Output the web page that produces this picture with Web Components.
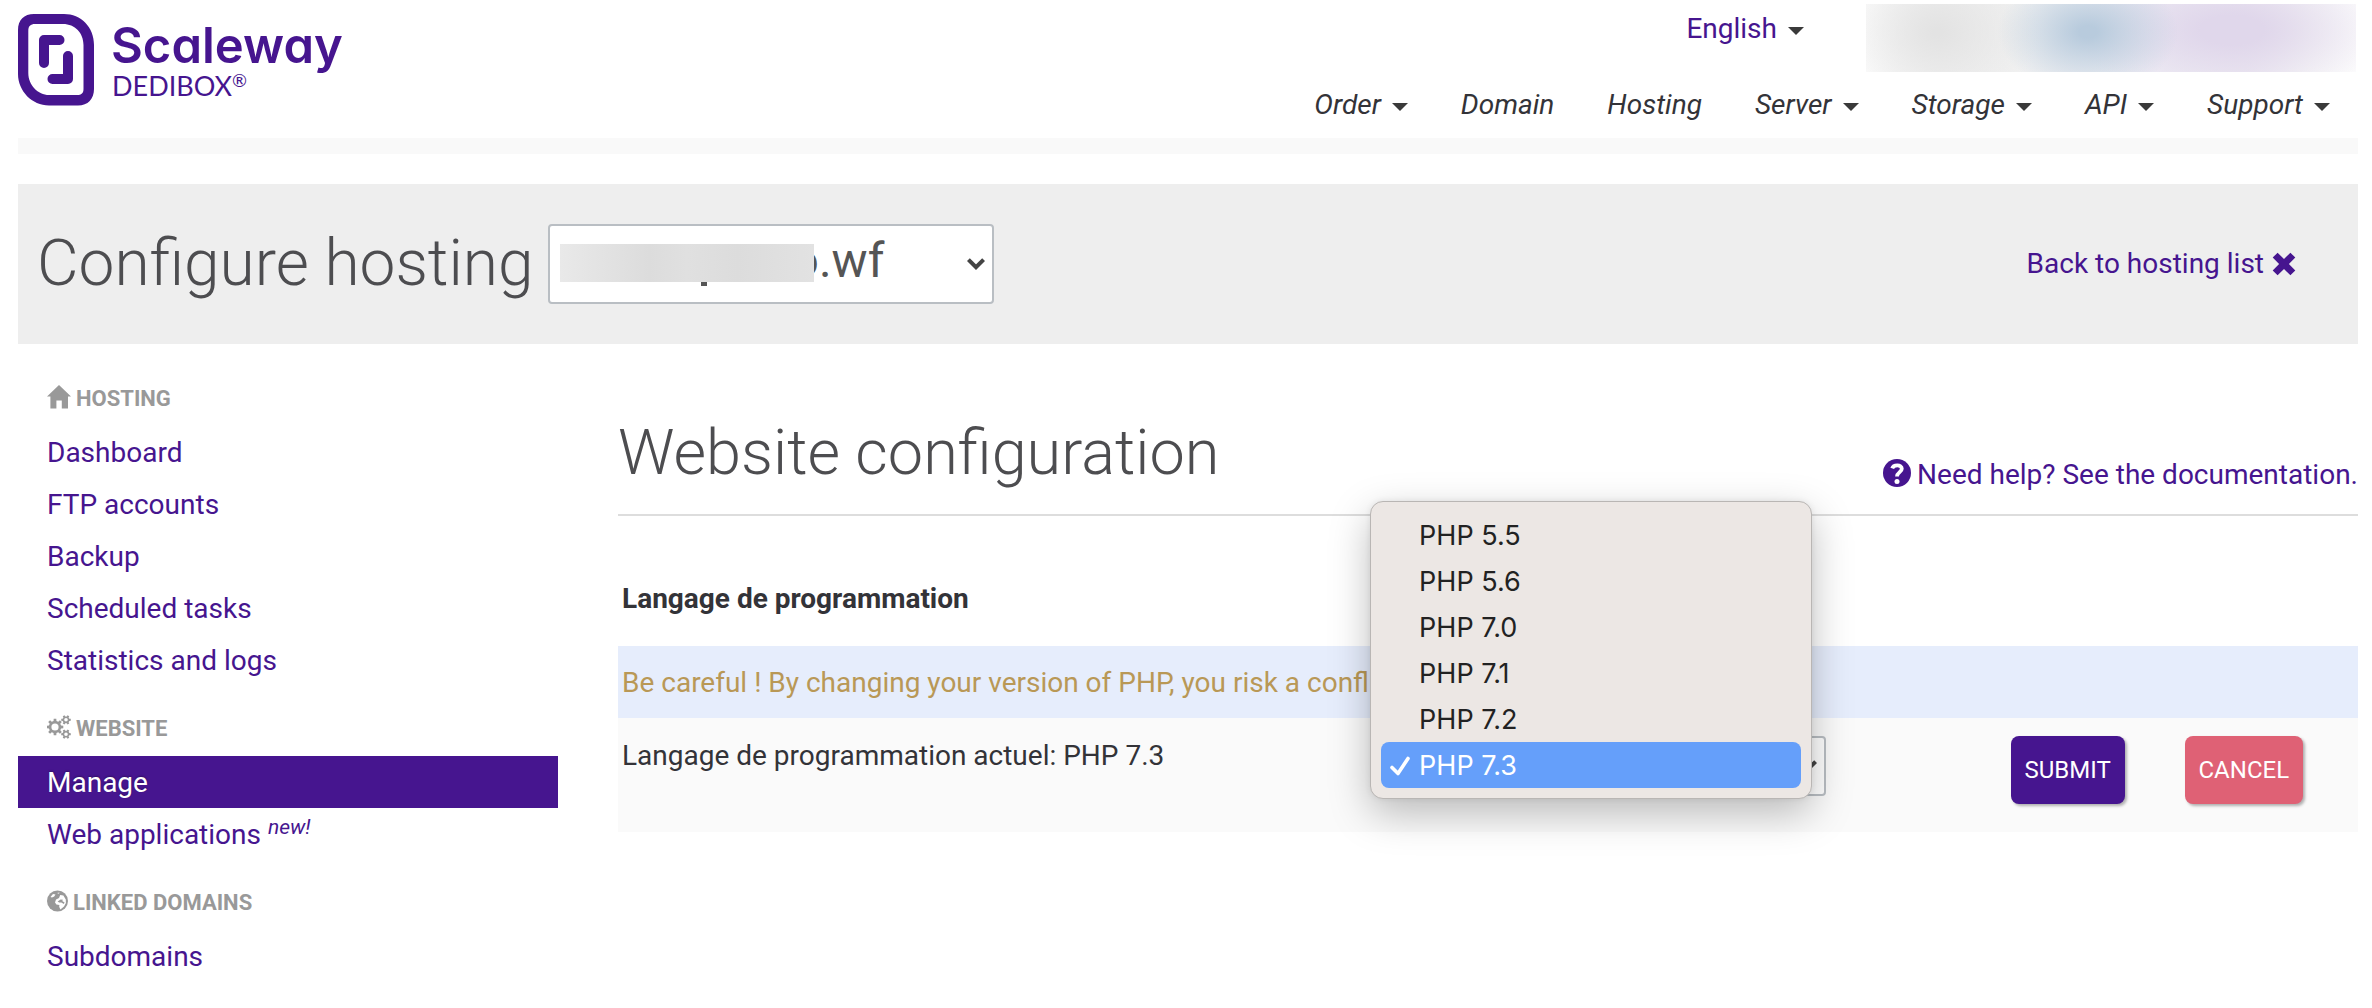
<!DOCTYPE html>
<html lang="en">
<head>
<meta charset="utf-8">
<title>Scaleway Dedibox - Configure hosting</title>
<style>
  body { margin: 0; background: #fff; color: #333338; font: 28px/40px Roboto, "Liberation Sans", sans-serif; }
</style>
</head>
<body>
<sw-app></sw-app>

<script>
const PURPLE = '#46158f';

const define = (name, html) => customElements.define(name, class extends HTMLElement {
  constructor() {
    super();
    this.attachShadow({ mode: 'open' }).innerHTML = html;
  }
});

/* Outline of a cog wheel with a round hole. */
function gear(cx, cy, outer, inner, hole, teeth) {
  const pts = [];
  const step = Math.PI * 2 / teeth;
  for (let i = 0; i < teeth; i++) {
    const a = i * step;
    for (const [r, d] of [[inner, -0.30], [outer, -0.20], [outer, 0.20], [inner, 0.30]]) {
      pts.push((cx + r * Math.cos(a + d * step)).toFixed(2) + ' ' + (cy + r * Math.sin(a + d * step)).toFixed(2));
    }
  }
  return `M${pts.join('L')}ZM${cx - hole} ${cy}a${hole} ${hole} 0 1 0 ${hole * 2} 0a${hole} ${hole} 0 1 0 ${-hole * 2} 0Z`;
}

const ICONS = {
  home: [24, 24, '<path d="M12 0L24 11.6H21V23.6H14.8V15.4H9.4V23.6H3.4V11.6H0Z"/>'],
  cogs: [24, 24, `<path fill-rule="evenodd" d="${gear(8, 12, 8.4, 6.2, 3.6, 8)}${gear(19, 4.8, 4.9, 3.5, 1.8, 6)}${gear(19, 19.2, 4.9, 3.5, 1.8, 6)}"/>`],
  globe: [21, 22, '<circle cx="10.500" cy="11" r="10.500"/><path fill="#fff" d="M3.500 7L6 4L8.500 4.400L7.200 6.600L5 7.600ZM10 3L12.500 2.400L12 3.800ZM8 12.400L9 9.600L12 8L13.200 5L16.400 5.600L18.800 9.400L18.900 13L17 16.600L13.400 19.400L12.200 16.800L12.400 15L9.400 14.600Z"/><path d="M10.600 11.600L13.600 9.600L16 9.800L15.200 11L17.600 12.600L16.800 14L14.400 12.400L12.200 12.600Z"/>'],
  cross: [24, 24, '<path d="M5.600 0.700L12 7.100L18.400 0.700L23.300 5.600L16.900 12L23.300 18.400L18.400 23.300L12 16.900L5.600 23.300L0.700 18.400L7.100 12L0.700 5.600Z"/>'],
  help: [28, 28, '<circle cx="14" cy="14" r="14"/><path d="M9.200 9.400C10.400 5.400 18.800 5.200 18.800 9.800C18.800 13.200 14 13.200 14 17.600" fill="none" stroke="#fff" stroke-width="3.800"/><circle cx="14" cy="22.400" r="2.500" fill="#fff"/>'],
  caret: [16, 8, '<path d="M0 0H16L8 8Z"/>'],
  chevron: [18, 12, '<path d="M1.400 1.600L9 9.200L16.600 1.600" fill="none" stroke="currentColor" stroke-width="4"/>'],
  check: [20, 20, '<path d="M2 11.500L8 17.500L18 2.500" fill="none" stroke="currentColor" stroke-width="3.600" stroke-linecap="round" stroke-linejoin="round"/>']
};

customElements.define('sw-icon', class extends HTMLElement {
  connectedCallback() {
    const [w, h, body] = ICONS[this.getAttribute('name')];
    this.attachShadow({ mode: 'open' }).innerHTML = `
      <style>:host { display: inline-block; flex: none; line-height: 0; } svg { display: block; }</style>
      <svg width="${w}" height="${h}" viewBox="0 0 ${w} ${h}" fill="currentColor" aria-hidden="true">${body}</svg>`;
  }
});

define('sw-logo', `
  <style>
    :host { display: block; color: ${PURPLE}; }
    a { display: flex; gap: 17px; color: inherit; text-decoration: none; }
    svg { display: block; }
    .words { display: flex; flex-direction: column; padding-top: 6px; }
    .name { font: 600 49px/52px Inter, Lato, sans-serif; font-feature-settings: "cv11"; }
    .product { display: flex; align-items: flex-start; font: 27px/28px Lato, sans-serif; padding-left: 1px; }
    .mark { font-size: 18px; line-height: 16px; }
  </style>
  <a href="#">
    <svg width="76" height="92" viewBox="0 0 76 92" aria-hidden="true">
      <path fill="currentColor" fill-rule="evenodd" d="M16 0H46C63 0 76 13 76 31V75C76 85 70 91.500 60 91.500H31C14 91.500 0 77 0 60V16C0 6 6 0 16 0ZM17 10C12.500 10 10.300 12 10.300 17V59C10.300 71 20 81 31 81H59C63.500 81 65.500 79 65.500 75V31C65.500 19 57 10 45 10Z"/>
      <path fill="none" stroke="currentColor" stroke-width="10" stroke-linecap="round" stroke-linejoin="round" d="M26 49V26H41.500M50 42V65H34.500"/>
    </svg>
    <span class="words">
      <span class="name">Scaleway</span>
      <span class="product">DEDIBOX<span class="mark">®</span></span>
    </span>
  </a>`);

define('sw-menu-item', `
  <style>
    :host { display: block; }
    a { display: flex; align-items: center; gap: 11px; color: inherit; text-decoration: none; }
    .caret { display: none; color: #3a3a3a; }
    :host([menu]) .caret { display: inline-block; padding-top: 4px; }
  </style>
  <a href="#"><slot></slot><sw-icon class="caret" name="caret"></sw-icon></a>`);

define('sw-header', `
  <style>
    :host { display: block; border-bottom: 16px solid #f9f9f9; }
    .bar { display: flex; justify-content: space-between; align-items: flex-start; padding-bottom: 13px; }
    sw-logo { padding-top: 14px; }
    .right { display: flex; flex-direction: column; align-items: flex-end; gap: 13px; }
    .account { display: flex; align-items: flex-start; gap: 62px; padding: 4px 2px 0 0; }
    .account sw-menu-item { color: ${PURPLE}; padding-top: 5px; }
    .user {
      width: 490px; height: 68px;
      background:
        radial-gradient(ellipse 90px 62px at 222px 28px, #b8cbdd 10%, #b8cbdd00 100%),
        radial-gradient(ellipse 160px 74px at 366px 26px, #e0d7eb 20%, #e0d7eb00 100%),
        radial-gradient(ellipse 100px 80px at 72px 28px, #e3e3e3 5%, #e3e3e300 100%),
        linear-gradient(90deg, #fcfcfc 0, #f2f2f2 70px, #f1f1f1 150px, #f0eff5 290px, #efecf3 380px, #f8f8f8 440px, #fdfdfd 100%);
    }
    nav { display: flex; gap: 53px; padding-right: 28px; font-style: italic; }
  </style>
  <div class="bar">
    <sw-logo></sw-logo>
    <div class="right">
      <div class="account"><sw-menu-item menu>English</sw-menu-item><div class="user" aria-hidden="true"></div></div>
      <nav>
        <sw-menu-item menu>Order</sw-menu-item>
        <sw-menu-item>Domain</sw-menu-item>
        <sw-menu-item>Hosting</sw-menu-item>
        <sw-menu-item menu>Server</sw-menu-item>
        <sw-menu-item menu>Storage</sw-menu-item>
        <sw-menu-item menu>API</sw-menu-item>
        <sw-menu-item menu>Support</sw-menu-item>
      </nav>
    </div>
  </div>`);

/* Frame that puts a chevron over a slotted select. */
define('sw-select', `
  <style>
    :host { display: block; position: relative; }
    .chevron { position: absolute; right: 9px; top: 0; bottom: 0; display: flex; align-items: center; color: #444; pointer-events: none; }
  </style>
  <slot></slot><span class="chevron"><sw-icon name="chevron"></sw-icon></span><slot name="over"></slot>`);

const SELECT_CSS = `
  select { appearance: none; display: block; box-sizing: border-box; width: 100%; margin: 0; border: 2px solid #b9bec3; border-radius: 4px; background: #fff; color: #555; font-family: Roboto, sans-serif; }`;

define('sw-page-bar', `
  <style>
    :host { display: flex; align-items: center; justify-content: space-between; background: #eee; margin-top: 30px; padding: 40px 62px 40px 19px; }
    .title { display: flex; align-items: center; gap: 14px; }
    h1 { margin: 0; font-size: 64px; line-height: 80px; font-weight: 300; color: #4d4d50; }
    sw-select { width: 446px; }
    ${SELECT_CSS}
    select { height: 80px; padding: 0 40px 8px 242px; font-size: 48px; }
    .mask { position: absolute; left: 12px; top: 20px; }
    a { display: flex; align-items: center; gap: 8px; color: ${PURPLE}; text-decoration: none; }
  </style>
  <div class="title">
    <h1><label for="domain">Configure hosting</label></h1>
    <sw-select>
      <select id="domain"><option>o.wf</option></select>
      <svg slot="over" class="mask" width="254" height="42" viewBox="0 0 254 42" aria-hidden="true">
        <defs>
          <linearGradient id="g"><stop offset="0" stop-color="#e9e9e9"/><stop offset=".35" stop-color="#dcdcdc"/><stop offset=".5" stop-color="#e0e0e0"/><stop offset=".7" stop-color="#dcdcdc"/><stop offset="1" stop-color="#e2e2e2"/></linearGradient>
        </defs>
        <path d="M141 38h6v4h-6z" fill="#555"/>
        <path d="M0 0h254v38H0z" fill="url(#g)"/>
      </svg>
    </sw-select>
  </div>
  <a href="#">Back to hosting list <sw-icon name="cross"></sw-icon></a>`);

define('sw-side-section', `
  <style>
    :host { display: block; }
    h2 { display: flex; align-items: center; gap: 5px; margin: 0; padding: 23px 29px 7px; font-size: 22px; line-height: 40px; font-weight: 700; color: #999; text-transform: uppercase; }
    ::slotted(sw-icon) { padding-bottom: 4px; }
  </style>
  <h2><slot name="icon"></slot><slot name="title"></slot></h2>
  <slot></slot>`);

define('sw-side-link', `
  <style>
    :host { display: block; }
    a { display: block; padding: 2px 29px 0; line-height: 50px; color: ${PURPLE}; text-decoration: none; }
    :host([current]) a { background: ${PURPLE}; color: #fff; text-shadow: 0 -1px 2px rgba(0,0,0,.3); }
  </style>
  <a href="#"><slot></slot></a>`);

define('sw-sidebar', `
  <style>
    :host { display: block; padding-top: 12px; }
    sup { font-size: 21px; line-height: 0; font-style: italic; vertical-align: 10px; }
  </style>
  <nav>
    <sw-side-section>
      <sw-icon slot="icon" name="home"></sw-icon><span slot="title">Hosting</span>
      <sw-side-link>Dashboard</sw-side-link>
      <sw-side-link>FTP accounts</sw-side-link>
      <sw-side-link>Backup</sw-side-link>
      <sw-side-link>Scheduled tasks</sw-side-link>
      <sw-side-link>Statistics and logs</sw-side-link>
    </sw-side-section>
    <sw-side-section>
      <sw-icon slot="icon" name="cogs"></sw-icon><span slot="title">Website</span>
      <sw-side-link current>Manage</sw-side-link>
      <sw-side-link>Web applications <sup>new!</sup></sw-side-link>
    </sw-side-section>
    <sw-side-section>
      <sw-icon slot="icon" name="globe"></sw-icon><span slot="title">Linked domains</span>
      <sw-side-link>Subdomains</sw-side-link>
    </sw-side-section>
  </nav>`);

define('sw-button', `
  <style>
    :host { display: inline-block; vertical-align: top; }
    button { display: block; height: 68px; padding: 0 14px; border: 0; border-radius: 8px; background: ${PURPLE}; color: #fff; font: 24px/40px Roboto, sans-serif; text-transform: uppercase; white-space: nowrap; box-shadow: 2px 2px 3px rgba(0,0,0,.3); }
    :host([danger]) button { background: #df6175; }
  </style>
  <button type="button"><slot></slot></button>`);

define('sw-option', `
  <style>
    :host { display: flex; align-items: center; box-sizing: border-box; height: 46px; padding: 2px 0 0 9px; border-radius: 8px; color: #222; }
    .tick { width: 29px; display: flex; }
    sw-icon { visibility: hidden; }
    :host([aria-selected="true"]) { background: #659ffa; color: #fff; }
    :host([aria-selected="true"]) sw-icon { visibility: visible; }
  </style>
  <span class="tick"><sw-icon name="check"></sw-icon></span><slot></slot>`);

define('sw-popup', `
  <style>
    :host { position: absolute; z-index: 2; left: -14px; right: 14px; bottom: -3px; display: block; padding: 10px; border: 1px solid #b9b6b4; border-radius: 13px; background: #ece7e4; font: 27px/44px Inter, sans-serif; box-shadow: 0 14px 40px rgba(0,0,0,.26), 0 0 6px rgba(0,0,0,.08); }
  </style>
  <slot></slot>`);

define('sw-php-form', `
  <style>
    :host { display: block; }
    table { width: 100%; table-layout: fixed; border-collapse: collapse; text-align: left; }
    .label { width: 43.8%; } .field { width: 36%; } .action { width: 10%; }
    th { padding: 17px 4px 27px; }
    td { padding: 18px 4px 28px; vertical-align: top; background: #fafafa; }
    .warning td { padding: 17px 4px 15px; background: #e6edfc; color: #b99856; }
    sw-select { width: 442px; max-width: 100%; }
    ${SELECT_CSS}
    select { height: 60px; padding: 0 36px 0 10px; font-size: 28px; }
  </style>
  <table>
    <colgroup><col class="label"><col class="field"><col class="action"><col></colgroup>
    <thead><tr><th colspan="4">Langage de programmation</th></tr></thead>
    <tbody>
      <tr class="warning"><td colspan="4">Be careful ! By changing your version of PHP, you risk a conflict</td></tr>
      <tr>
        <td><label for="version">Langage de programmation actuel: PHP 7.3</label></td>
        <td>
          <sw-select>
            <select id="version"><option>PHP 7.3</option></select>
            <sw-popup slot="over" role="listbox">
              <sw-option role="option">PHP 5.5</sw-option>
              <sw-option role="option">PHP 5.6</sw-option>
              <sw-option role="option">PHP 7.0</sw-option>
              <sw-option role="option">PHP 7.1</sw-option>
              <sw-option role="option">PHP 7.2</sw-option>
              <sw-option role="option" aria-selected="true">PHP 7.3</sw-option>
            </sw-popup>
          </sw-select>
        </td>
        <td><sw-button>Submit</sw-button></td>
        <td><sw-button danger>Cancel</sw-button></td>
      </tr>
    </tbody>
  </table>`);

define('sw-content', `
  <style>
    :host { display: block; padding-top: 67px; }
    header { display: flex; align-items: flex-end; justify-content: space-between; padding-bottom: 19px; margin-bottom: 46px; border-bottom: 2px solid #ddd; }
    h2 { margin: 0; font-size: 63px; line-height: 84px; font-weight: 300; color: #4d4d50; }
    a { display: flex; align-items: center; gap: 6px; color: ${PURPLE}; text-decoration: none; }
    a sw-icon { padding-bottom: 5px; }
  </style>
  <header>
    <h2>Website configuration</h2>
    <a href="#"><sw-icon name="help"></sw-icon>Need help? See the documentation.</a>
  </header>
  <sw-php-form></sw-php-form>`);

define('sw-app', `
  <style>
    :host { display: block; padding: 0 14px 0 18px; }
    .columns { display: grid; grid-template-columns: minmax(0, 540fr) minmax(0, 1740fr); gap: 60px; }
  </style>
  <sw-header></sw-header>
  <sw-page-bar></sw-page-bar>
  <div class="columns">
    <sw-sidebar></sw-sidebar>
    <main><sw-content></sw-content></main>
  </div>`);
</script>
</body>
</html>
